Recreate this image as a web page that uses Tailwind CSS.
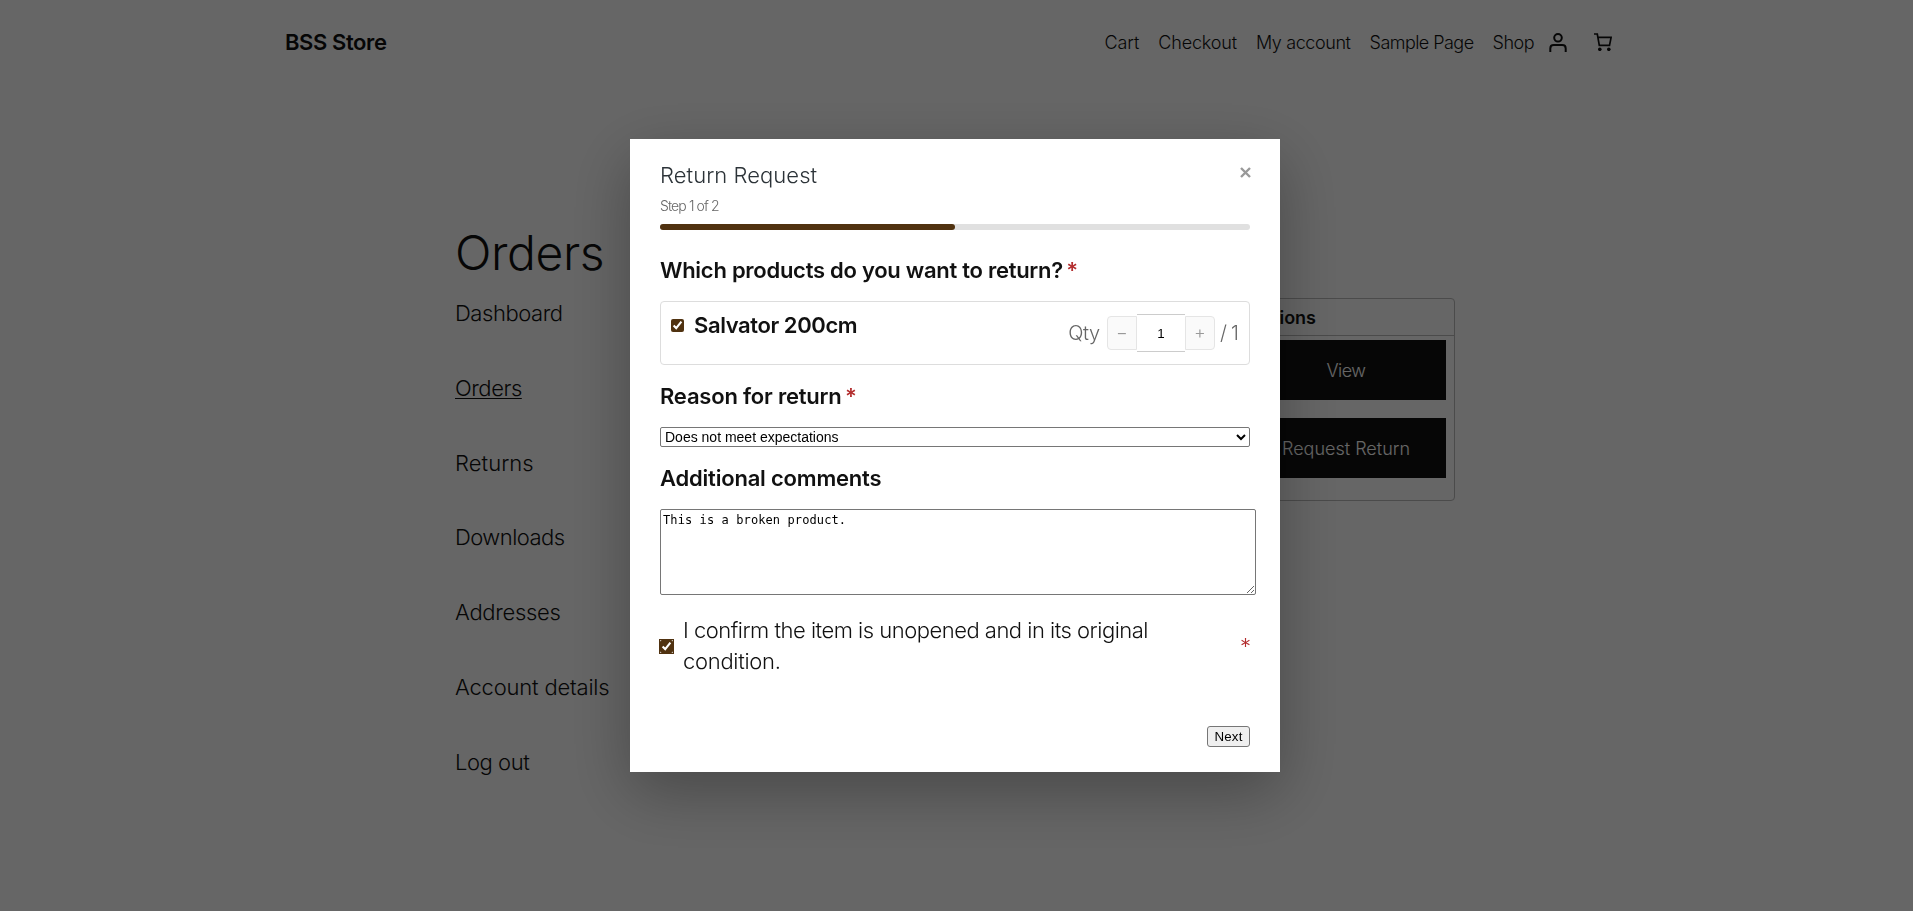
<!DOCTYPE html>
<html lang="en">
  <head>
    <meta charset="UTF-8" />
    <meta name="viewport" content="width=device-width,initial-scale=1.0" />
    <title>Orders - BSS Store</title>
    <script src="https://cdn.jsdelivr.net/npm/@tailwindcss/browser@4"></script>
  </head>
  <body class="h-screen overflow-hidden bg-white font-['Inter','Liberation_Sans',sans-serif] font-light text-[#111]">
    <header class="flex h-[86px] items-center justify-between pr-[301px] pb-0.5 pl-[285px]">
      <a class="text-[22px] font-semibold tracking-[-0.4px]" href="#">BSS Store</a>
      <div class="flex items-center">
        <nav class="flex gap-[19px] text-[18px] tracking-[-0.5px]">
          <a class="tracking-[-0.1px]" href="#">Cart</a>
          <a class="tracking-[-0.15px]" href="#">Checkout</a>
          <a class="tracking-[-0.4px]" href="#">My account</a>
          <a class="tracking-[-0.55px]" href="#">Sample Page</a>
          <a href="#">Shop</a>
        </nav>
        <svg class="ml-[15px] h-[19px] w-[18px]" viewBox="0 0 18 19" fill="none" stroke="#111" stroke-width="2"><circle cx="9" cy="4.800" r="3.800" /><path d="M1.300 19v-3.600q0-3.400 3.400-3.400h8.600q3.400 0 3.400 3.400V19" /></svg>
        <svg class="ml-[27px] size-[18px]" viewBox="0 0 18 18" fill="none" stroke="#111" stroke-width="1.700"><path d="M0 1h3.300l2 11.400h10.200L17.100 4.300H4" /><circle cx="5.800" cy="16.300" r="1.800" fill="#111" stroke="none" /><circle cx="14.800" cy="16.300" r="1.800" fill="#111" stroke="none" /></svg>
      </div>
    </header>

    <main class="mt-[137px] ml-[455px] w-[1000px]">
      <h1 class="text-[48px] leading-[60px] tracking-[-0.4px]">Orders</h1>
      <div class="mt-[15px] flex justify-between">
        <nav class="flex flex-col gap-[44.8px] text-[22px] leading-[30px] tracking-[-0.45px]">
          <a href="#">Dashboard</a>
          <a class="underline decoration-1 underline-offset-2" href="#">Orders</a>
          <a class="tracking-[0.05px]" href="#">Returns</a>
          <a class="tracking-[-0.55px]" href="#">Downloads</a>
          <a class="tracking-[-0.3px]" href="#">Addresses</a>
          <a class="tracking-[-0.2px]" href="#">Account details</a>
          <a href="#">Log out</a>
        </nav>
        <div class="h-[203px] w-[740px] rounded border border-[#bbb] text-[18px]">
          <div class="flex h-[37px] items-center justify-end border-b border-[#bbb] pr-[138px] font-semibold">Actions</div>
          <div class="flex flex-col items-end gap-[18px] pt-1 pr-2 text-white">
            <a class="flex h-[60px] w-[200px] items-center justify-center bg-[#111] tracking-[-0.5px]" href="#">View</a>
            <a class="flex h-[60px] w-[200px] items-center justify-center bg-[#111]" href="#">Request Return</a>
          </div>
        </div>
      </div>
    </main>

    <!-- return request modal -->
    <div class="fixed inset-0 flex items-center justify-center bg-black/60 pr-[3px]">
      <div class="relative flex h-[633px] w-[650px] flex-col bg-white px-[30px] pt-[21px] shadow-[0_20px_60px_rgba(0,0,0,0.3)]">
        <button class="absolute top-7 right-[29px] text-[#999]">
          <svg class="size-[11px]" viewBox="0 0 11 11" stroke="currentColor" stroke-width="2.400"><path d="M1 1l9 9M10 1l-9 9" /></svg>
        </button>
        <h2 class="text-[22px] leading-[30px] font-[350] tracking-[0.05px] text-[#2c3338]">Return Request</h2>
        <p class="mt-1.5 text-[14px] leading-5 tracking-[-0.9px] text-[#666]">Step 1 of 2</p>
        <div class="mt-2 h-1.5 shrink-0 rounded-full bg-[#e0e0e0]"><div class="h-full w-1/2 rounded-full bg-[#503210]"></div></div>

        <h3 class="mt-[25px] text-[22px] leading-[30px] font-semibold tracking-[-0.27px]">Which products do you want to return? <span class="-ml-0.5 text-[#b32d2e]">*</span></h3>
        <div class="mt-4 flex h-16 shrink-0 rounded border border-[#ddd] pr-[11px] pl-2.5">
          <input class="mt-[17px] size-[13px] accent-[#503210]" type="checkbox" checked />
          <div class="mt-2 ml-2.5 text-[22px] leading-[30px] font-semibold tracking-[-0.4px]">Salvator 200cm</div>
          <div class="ml-auto flex h-[62px] items-center text-[20px] text-[#666]">
            <span class="tracking-[-0.3px]">Qty</span>
            <button class="ml-[7px] h-[34px] w-[30px] rounded-l border border-[#e5e5e5] bg-[#fafafa] text-[18px] leading-none text-[#999]">−</button>
            <input class="h-[38px] w-12 border-y border-[#ccc] bg-white text-center font-['Liberation_Sans',sans-serif] text-[13.333px] font-normal text-black" type="text" value="1" />
            <button class="mr-[5px] h-[34px] w-[30px] rounded-r border border-[#e5e5e5] bg-[#fafafa] text-[18px] leading-none text-[#999]">+</button>
            <span class="tracking-[-0.8px]">/ 1</span>
          </div>
        </div>

        <h3 class="mt-4 text-[22px] leading-[30px] font-semibold tracking-[-0.2px]">Reason for return <span class="-ml-0.5 text-[#b32d2e]">*</span></h3>
        <select class="mt-4 h-5 shrink-0 rounded-[2px] border border-[#767676] bg-white font-['Liberation_Sans',sans-serif] text-[14px] leading-none font-normal text-black">
          <option>Does not meet expectations</option>
        </select>
        <h3 class="mt-4 text-[22px] leading-[30px] font-semibold tracking-[-0.2px]">Additional comments</h3>
        <textarea class="mt-4 h-[86px] w-[596px] shrink-0 rounded-[2px] border border-[#767676] bg-white p-0.5 font-['DejaVu_Sans_Mono',monospace] text-[12px] leading-[17px] font-normal tracking-[0.1px] text-black">This is a broken product.</textarea>

        <label class="mt-5 flex items-center text-[22px] leading-[31px]">
          <input class="size-[13px] shrink-0 accent-[#503210] outline-1 outline-[#503210]" type="checkbox" checked />
          <span class="ml-2.5 w-[500px] tracking-[-0.5px]">I confirm the item is unopened and in its original <span class="tracking-[-0.3px]">condition.</span></span>
          <span class="-mr-px ml-auto text-[#b32d2e]">*</span>
        </label>
        <button class="mt-[49px] h-[21px] w-[43px] shrink-0 self-end rounded-[3px] border border-[#767676] bg-[#efefef] font-['Liberation_Sans',sans-serif] text-[13.333px] leading-none font-normal tracking-[0.2px] text-black">Next</button>
      </div>
    </div>
  </body>
</html>
